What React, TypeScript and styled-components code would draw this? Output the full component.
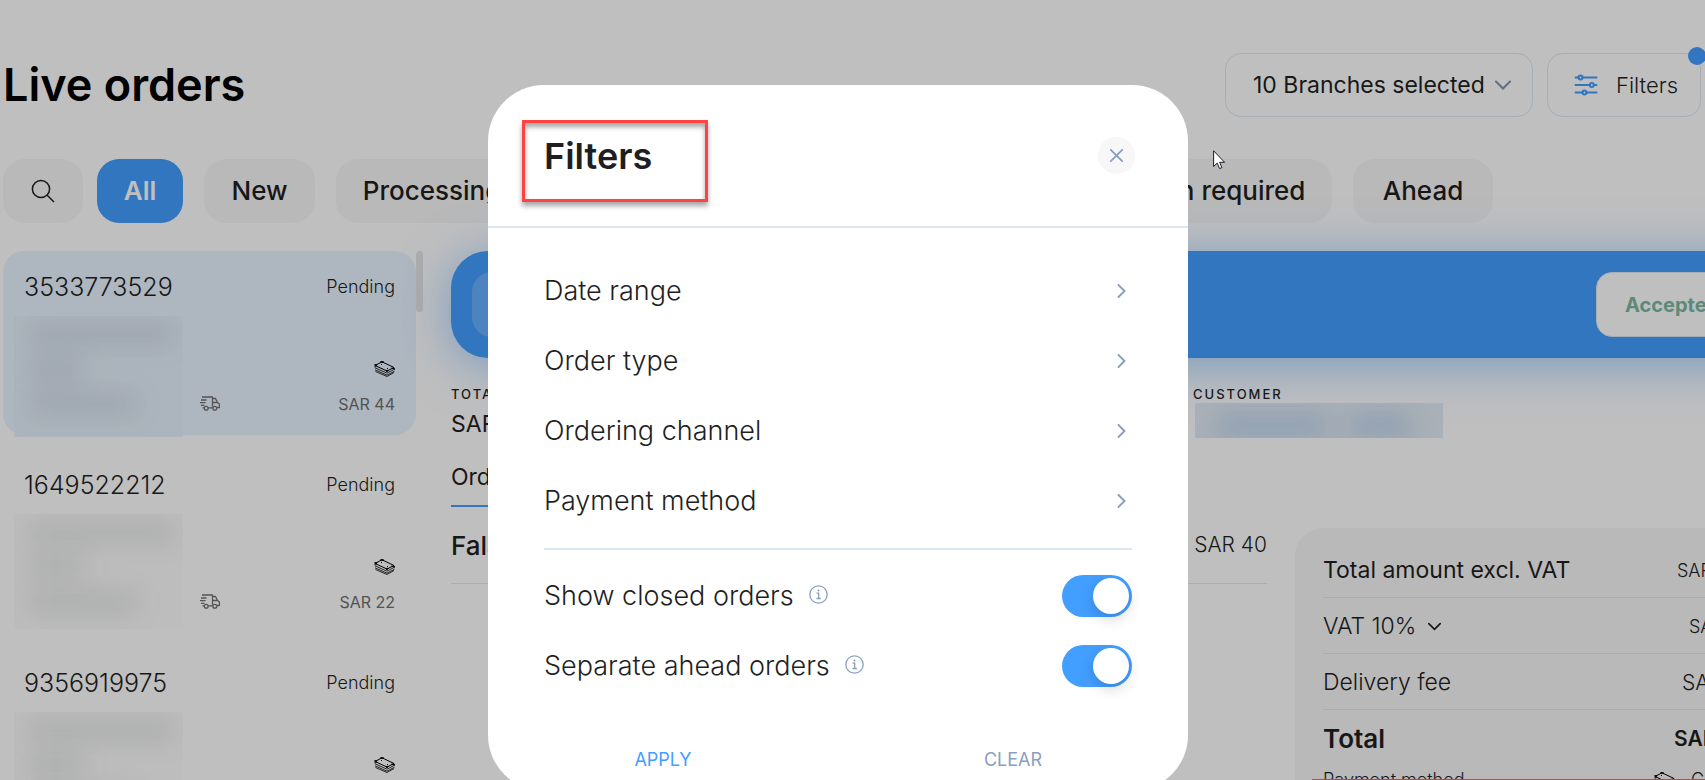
import React from "react";
import styled, { createGlobalStyle, css } from "styled-components";

const GlobalStyle = createGlobalStyle`
  *, *::before, *::after { box-sizing: border-box; }
  body {
    margin: 0;
    overflow: hidden;
    background: #fff;
    color: #1f1f1f;
    font-family: Inter, "Liberation Sans", sans-serif;
    font-size: 23px;
    line-height: 1.5;
  }
  button, select, input { font: inherit; color: inherit; }
  button { border: 0; background: none; padding: 0; cursor: pointer; }
  h1, h2, h3, p, ul, dl, dd, dt { margin: 0; padding: 0; }
  ul { list-style: none; }
`;

const colors = {
  blue: "#429eff",
  line: "#dae8f4",
  pill: "#f7f7f7",
  muted: "#8a9ebf",
};

/* ---------- page ---------- */

const Page = styled.div`
  position: relative;
  height: 100vh;
  overflow: hidden;
  display: flex;
  flex-direction: column;
  padding: 53px 4px 0 3px;
`;

const PageHeader = styled.header`
  display: flex;
  align-items: center;
  gap: 14px;
  height: 64px;
  flex: none;
`;

const PageTitle = styled.h1`
  flex: 1;
  font-size: 45px;
  line-height: 64px;
  font-weight: 600;
  color: #000;
`;

const BranchPicker = styled.label`
  position: relative;
  display: flex;
  align-items: center;
  width: 308px;
  height: 64px;
  border: 1px solid ${colors.line};
  border-radius: 16px;

  select {
    width: 100%;
    height: 100%;
    margin: 0;
    padding: 0 36px 0 27px;
    border: 0;
    background: none;
    appearance: none;
  }
  svg {
    position: absolute;
    right: 21px;
    pointer-events: none;
  }
`;

const FilterButton = styled.button`
  position: relative;
  display: flex;
  align-items: center;
  gap: 18px;
  width: 154px;
  height: 64px;
  padding-left: 26px;
  border: 1px solid ${colors.line};
  border-radius: 16px;
  font-size: 22px;
  font-weight: 300;
`;

const ActiveDot = styled.span`
  position: absolute;
  top: -7px;
  right: -6px;
  width: 18px;
  height: 18px;
  border-radius: 50%;
  background: ${colors.blue};
`;

const Tabs = styled.nav`
  display: flex;
  gap: 21px;
  flex: none;
  margin-top: 42px;
`;

const Tab = styled.button<{ $width: number; $active?: boolean }>`
  flex: none;
  width: ${(p) => p.$width}px;
  height: 64px;
  padding-bottom: 2px;
  border-radius: 22px;
  background: ${(p) => (p.$active ? colors.blue : colors.pill)};
  color: ${(p) => (p.$active ? "#fff" : "#1f1f1f")};
  font-size: 26px;
  font-weight: ${(p) => (p.$active ? 600 : 500)};
  white-space: nowrap;
`;

const SearchButton = styled.button`
  display: grid;
  place-items: center;
  flex: none;
  width: 80px;
  height: 64px;
  margin-right: -7px;
  border-radius: 22px;
  background: ${colors.pill};
`;

const Columns = styled.div`
  display: flex;
  flex: 1;
  min-height: 0;
  gap: 28px;
  margin-top: 28px;
`;

/* ---------- order list ---------- */

const OrderList = styled.section`
  display: flex;
  flex: none;
  align-items: flex-start;
`;

const Orders = styled.ul`
  display: flex;
  flex-direction: column;
  gap: 14px;
  width: 413px;
`;

const ScrollThumb = styled.div`
  width: 7px;
  height: 61px;
  border-radius: 4px;
  background: #e6e6e6;
`;

const OrderCard = styled.li<{ $selected?: boolean }>`
  display: grid;
  grid-template-columns: 180px 1fr auto;
  grid-template-rows: 36px 53px 22px 48px;
  height: 184px;
  padding: 18px 21px 0 11px;
  border-radius: 21px;
  background: ${(p) => (p.$selected ? "#e9f4ff" : "transparent")};
`;

const OrderNumber = styled.h3`
  grid-column: 1 / 3;
  padding-left: 10px;
  font-size: 25px;
  line-height: 36px;
  font-weight: 300;
`;

const Status = styled.span`
  font-size: 18px;
  line-height: 36px;
  font-weight: 300;
`;

const Redacted = styled.div<{ $selected?: boolean }>`
  grid-column: 1;
  grid-row: 2 / 5;
  display: flex;
  flex-direction: column;
  gap: 11px;
  width: 169px;
  height: ${(p) => (p.$selected ? 121 : 115)}px;
  margin-top: 11px;
  padding: 6px 14px;
  overflow: hidden;
  background: ${(p) => (p.$selected ? "#e6f1fc" : "#fcfcfc")};
`;

const Smudge = styled.span<{ $width: number }>`
  flex: none;
  width: ${(p) => p.$width}px;
  height: 24px;
  background: rgba(60, 70, 80, 0.1);
  filter: blur(12px);
`;

const PaymentIcon = styled.span`
  grid-column: 3;
  grid-row: 3;
  display: flex;
  justify-content: flex-end;
  align-items: center;
`;

const DeliveryIcon = styled.span`
  grid-column: 2;
  grid-row: 4;
  display: flex;
  align-items: center;
  padding: 0 0 2px 6px;
`;

const OrderPrice = styled.span`
  grid-column: 3;
  grid-row: 4;
  text-align: right;
  font-size: 16px;
  line-height: 48px;
  color: #6f6f6f;
`;

/* ---------- order detail ---------- */

const Detail = styled.main`
  flex: 1;
  min-width: 0;
  margin-right: -94px;
`;

const Banner = styled.div`
  display: flex;
  justify-content: space-between;
  padding: 21px;
  border-radius: 37px;
  background: ${colors.blue};
  box-shadow: 0 7px 50px rgba(66, 158, 255, 0.5);
`;

const BannerChip = styled.div`
  width: 65px;
  height: 65px;
  border-radius: 20px;
  background: rgba(255, 255, 255, 0.2);
`;

const AcceptButton = styled.button`
  width: 178px;
  height: 65px;
  padding-left: 28px;
  border: 1px solid ${colors.line};
  border-radius: 16px;
  background: #fff;
  color: #7db8a0;
  text-align: left;
  font-size: 20px;
  font-weight: 700;
`;

const Meta = styled.dl`
  display: grid;
  grid-template-columns: 742px 1fr;
  margin-top: 24px;
`;

const MetaItem = styled.div`
  dt {
    font-size: 13px;
    line-height: 24px;
    font-weight: 500;
    letter-spacing: 2px;
    text-transform: uppercase;
  }
`;

const MetaValue = styled.dd`
  height: 37px;
  line-height: 36px;
`;

const CustomerName = styled.dd`
  && {
    display: flex;
    align-items: center;
    gap: 22px;
    width: 248px;
    height: 35px;
    margin: -3px 0 0 2px;
    padding: 10px 18px 0 22px;
    overflow: hidden;
    background: #e2ebf4;
  }
`;

const NameSmudge = styled.span<{ $width: number }>`
  width: ${(p) => p.$width}px;
  height: 22px;
  background: rgba(66, 140, 220, 0.24);
  filter: blur(12px);
`;

const DetailBody = styled.div`
  display: grid;
  grid-template-columns: 816px 1fr;
  gap: 28px;
  margin-top: 15px;
`;

const DetailTab = styled.button`
  display: block;
  height: 49px;
  padding-bottom: 8px;
  border-bottom: 2px solid ${colors.blue};
  text-align: left;
`;

const Item = styled.div`
  display: flex;
  align-items: center;
  justify-content: space-between;
  height: 77px;
  border-bottom: 1px solid ${colors.line};
  font-size: 21px;
  font-weight: 300;
`;

const ItemName = styled.h3`
  font-size: 26px;
  font-weight: 500;
`;

const Summary = styled.aside`
  margin-top: 70px;
  padding: 14px 28px;
  border-radius: 28px;
  background: ${colors.pill};
`;

const SummaryRow = styled.div<{ $bold?: boolean; $regular?: boolean }>`
  display: flex;
  align-items: center;
  height: 56px;
  padding-top: 2px;
  border-bottom: 1px solid ${colors.line};
  font-size: 23px;
  font-weight: ${(p) => (p.$regular ? 400 : 300)};
  ${(p) =>
    p.$bold &&
    css`
      border-color: transparent;
      font-size: 26px;
      font-weight: 600;
    `}
`;

const SummaryLabel = styled.span`
  display: flex;
  align-items: center;
  gap: 12px;
  flex: 1;
`;

const SummaryValue = styled.span<{ $width: number; $large?: boolean }>`
  width: ${(p) => p.$width}px;
  font-size: ${(p) => (p.$large ? 21 : 18)}px;
  font-weight: ${(p) => (p.$large ? "inherit" : 300)};
`;

const PaymentRow = styled.div`
  display: flex;
  align-items: flex-start;
  justify-content: space-between;
  font-size: 18px;
  font-weight: 300;
`;

const PaymentValue = styled.span`
  display: flex;
  align-items: center;
  gap: 16px;
  width: 113px;
`;

const Notice = styled.div`
  position: absolute;
  left: 1312px;
  right: 0;
  bottom: 0;
  height: 1px;
  background: #ff5c6c;
`;

/* ---------- filters dialog ---------- */

const Backdrop = styled.div`
  position: absolute;
  inset: 0;
  display: flex;
  justify-content: center;
  align-items: flex-start;
  padding: 85px 29px 0 0;
  background: rgba(0, 0, 0, 0.25);
`;

const Dialog = styled.section`
  position: relative;
  width: 700px;
  border-radius: 56px;
  background: #fff;
`;

const DialogHeader = styled.header`
  display: flex;
  align-items: center;
  justify-content: space-between;
  height: 143px;
  padding: 0 53px 0 56px;
  border-bottom: 2px solid ${colors.line};
`;

const DialogTitle = styled.h2`
  font-size: 36px;
  font-weight: 600;
`;

const CloseButton = styled.button`
  display: grid;
  place-items: center;
  width: 37px;
  height: 37px;
  border-radius: 50%;
  background: #f7f7f7;
`;

const Highlight = styled.div`
  position: absolute;
  left: 34px;
  top: 35px;
  width: 186px;
  height: 82px;
  border: 3px solid #ff4343;
  box-shadow: 0 4px 5px rgba(0, 0, 0, 0.35), inset 0 4px 5px rgba(0, 0, 0, 0.35);
  pointer-events: none;
`;

const DialogBody = styled.div`
  padding: 28px 56px 0;
`;

const FilterRow = styled.button`
  display: flex;
  align-items: center;
  justify-content: space-between;
  width: 100%;
  height: 70px;
  padding-right: 6px;
  font-size: 27px;
  font-weight: 300;
`;

const Divider = styled.hr`
  height: 2px;
  margin: 12px 0 11px;
  border: 0;
  background: ${colors.line};
`;

const ToggleRow = styled.label`
  display: flex;
  align-items: center;
  height: 70px;
  font-size: 27px;
  font-weight: 300;

  svg {
    margin: 0 0 4px 15px;
  }
`;

const Switch = styled.input`
  appearance: none;
  display: flex;
  align-items: center;
  width: 70px;
  height: 42px;
  margin: 0 0 0 auto;
  padding: 3px;
  border-radius: 21px;
  background: #d5dbe3;

  &::before {
    content: "";
    width: 36px;
    height: 36px;
    border-radius: 50%;
    background: #fff;
    box-shadow: 0 5px 14px rgba(0, 0, 0, 0.16);
  }
  &:checked {
    justify-content: flex-end;
    background: ${colors.blue};
  }
`;

const DialogFooter = styled.footer`
  display: grid;
  grid-template-columns: 1fr 1fr;
  justify-items: center;
  padding: 26px 0 0;
`;

const FooterButton = styled.button<{ $primary?: boolean }>`
  width: 160px;
  height: 64px;
  color: ${(p) => (p.$primary ? colors.blue : colors.muted)};
  font-size: 18px;
`;

/* ---------- pointer ---------- */

const Pointer = styled.svg`
  position: absolute;
  left: 1213px;
  top: 150px;
`;

/* ---------- icons ---------- */

const SearchIcon = () => (
  <svg width="24" height="24" viewBox="0 0 24 24" fill="none" stroke="#1f1f1f" strokeWidth="1.5">
    <circle cx="10" cy="10" r="8.6" />
    <path d="M16 16l7 7" />
  </svg>
);

const SlidersIcon = () => (
  <svg width="24" height="22" viewBox="0 0 24 22" fill="none" stroke={colors.blue} strokeWidth="2" strokeLinecap="round">
    <path d="M1.5 3.5h3M8.5 3.5h14M1.5 11h14M20 11h2.5M1.5 18.5h7M12.5 18.5h10" />
    <circle cx="6.5" cy="3.5" r="2" />
    <circle cx="17.8" cy="11" r="2" />
    <circle cx="10.5" cy="18.5" r="2" />
  </svg>
);

const CaretDown = ({ color, size }: { color: string; size: number }) => (
  <svg width={size} height={size} viewBox="0 0 16 16" fill="none" stroke={color} strokeWidth="2" strokeLinecap="round">
    <path d="M1 4.5l7 7 7-7" />
  </svg>
);

const ChevronRight = () => (
  <svg width="9" height="14" viewBox="0 0 9 14" fill="none" stroke={colors.muted} strokeWidth="1.9" strokeLinecap="round" strokeLinejoin="round">
    <path d="M1.5 1l6 6-6 6" />
  </svg>
);

const CloseIcon = () => (
  <svg width="13" height="13" viewBox="0 0 13 13" fill="none" stroke={colors.muted} strokeWidth="1.8" strokeLinecap="round">
    <path d="M.8.8l11.4 11.4M12.2.8L.8 12.2" />
  </svg>
);

const InfoIcon = () => (
  <svg width="19" height="19" viewBox="0 0 19 19" fill="none" stroke={colors.muted} strokeWidth="1.3">
    <circle cx="9.5" cy="9.5" r="8.7" />
    <path d="M7.5 8.2h2.2v5M7.5 13.5h4.4" />
    <circle cx="9.5" cy="5.4" r="1" fill={colors.muted} stroke="none" />
  </svg>
);

const CashIcon = () => (
  <svg width="21" height="16" viewBox="0 0 21 16" fill="none" stroke="#000" strokeWidth="1" strokeLinejoin="round">
    <path d="M8 .8L20 6.5 13 10 1 4.5z" />
    <path d="M1 6.8l12 5.4 7.500-4M1 8.800l12 5.400 7.500-4M1 4.500v2M1.500 10.500L13 15.500l7-4" strokeWidth=".8" />
    <path d="M6.500.5h3l-1.500 1.500zM.5 3.500h2.500l-1 2zM17.500 7h3v1.500zM11.500 9.500h3l-1.500 1.500z" fill="#000" strokeWidth=".6" />
    <path d="M7 3.300l1 .4M13 7.400l1 .4" />
  </svg>
);

const TruckIcon = () => (
  <svg width="20" height="15" viewBox="0 0 20 15" fill="none" stroke="#707070" strokeWidth="1.3" strokeLinejoin="round">
    <path d="M2 1h10.500v9.800M12.500 2.500h3l2 4H12.500M17.500 6.500l1.900 1.500v3.500h-2.400M12.800 11.800H8M1 4h5.500M0 6.700h5.500M1 9.300h3.500M2.500 11.800h1.800" />
    <circle cx="6.2" cy="12.2" r="1.9" />
    <circle cx="14.8" cy="12.2" r="1.9" />
  </svg>
);

const PointerIcon = () => (
  <Pointer width="13" height="20" viewBox="0 0 13 20" fill="#fff" stroke="#1a1a2a" strokeWidth="1" aria-hidden>
    <path d="M.6.8v15.700l3.600-3.400 2.400 5.500 2.300-1-2.300-5.300h5z" />
  </Pointer>
);

/* ---------- data ---------- */

const orders = [
  { number: "3533773529", price: "SAR 44", selected: true },
  { number: "1649522212", price: "SAR 22" },
  { number: "9356919975", price: "SAR 31" },
];

const tabs = [
  { label: "All", width: 86, active: true },
  { label: "New", width: 111 },
  { label: "Processing", width: 192 },
  { label: "Ready", width: 120 },
  { label: "Dispatched", width: 200 },
  { label: "Delayed", width: 156 },
  { label: "Action required", width: 244 },
  { label: "Ahead", width: 140 },
];

const filters = ["Date range", "Order type", "Ordering channel", "Payment method"];
const toggles = ["Show closed orders", "Separate ahead orders"];

export default function App() {
  return (
    <>
      <GlobalStyle />
      <Page>
        <PageHeader>
          <PageTitle>Live orders</PageTitle>
          <BranchPicker>
            <select aria-label="Branches">
              <option>10 Branches selected</option>
            </select>
            <CaretDown color="#7f93ad" size={16} />
          </BranchPicker>
          <FilterButton>
            <SlidersIcon />
            Filters
            <ActiveDot />
          </FilterButton>
        </PageHeader>

        <Tabs>
          <SearchButton aria-label="Search">
            <SearchIcon />
          </SearchButton>
          {tabs.map((tab) => (
            <Tab key={tab.label} $width={tab.width} $active={tab.active}>
              {tab.label}
            </Tab>
          ))}
        </Tabs>

        <Columns>
          <OrderList>
            <Orders>
              {orders.map((order) => (
                <OrderCard key={order.number} $selected={order.selected}>
                  <OrderNumber>{order.number}</OrderNumber>
                  <Status>Pending</Status>
                  <Redacted $selected={order.selected}>
                    <Smudge $width={146} />
                    <Smudge $width={56} />
                    <Smudge $width={110} />
                  </Redacted>
                  <PaymentIcon>
                    <CashIcon />
                  </PaymentIcon>
                  <DeliveryIcon>
                    <TruckIcon />
                  </DeliveryIcon>
                  <OrderPrice>{order.price}</OrderPrice>
                </OrderCard>
              ))}
            </Orders>
            <ScrollThumb />
          </OrderList>

          <Detail>
            <Banner>
              <BannerChip />
              <AcceptButton>Accepted</AcceptButton>
            </Banner>
            <Meta>
              <MetaItem>
                <dt>Total</dt>
                <MetaValue>SAR 44</MetaValue>
              </MetaItem>
              <MetaItem>
                <dt>Customer</dt>
                <CustomerName>
                  <NameSmudge $width={110} />
                  <NameSmudge $width={60} />
                </CustomerName>
              </MetaItem>
            </Meta>
            <DetailBody>
              <div>
                <DetailTab>Order</DetailTab>
                <Item>
                  <ItemName>Falafel</ItemName>
                  SAR 40
                </Item>
              </div>
              <Summary>
                <SummaryRow $regular>
                  <SummaryLabel>Total amount excl. VAT</SummaryLabel>
                  <SummaryValue $width={90}>SAR 40</SummaryValue>
                </SummaryRow>
                <SummaryRow>
                  <SummaryLabel>
                    VAT 10% <CaretDown color="#1f1f1f" size={13} />
                  </SummaryLabel>
                  <SummaryValue $width={78}>SAR 4</SummaryValue>
                </SummaryRow>
                <SummaryRow>
                  <SummaryLabel>Delivery fee</SummaryLabel>
                  <SummaryValue $width={85} $large>SAR 0</SummaryValue>
                </SummaryRow>
                <SummaryRow $bold>
                  <SummaryLabel>Total</SummaryLabel>
                  <SummaryValue $width={93} $large>SAR 44</SummaryValue>
                </SummaryRow>
                <PaymentRow>
                  <span>Payment method</span>
                  <PaymentValue>
                    <CashIcon />
                    Cash
                  </PaymentValue>
                </PaymentRow>
              </Summary>
            </DetailBody>
          </Detail>
        </Columns>

        <Notice />

        <Backdrop>
          <Dialog role="dialog" aria-labelledby="filters-title">
            <DialogHeader>
              <DialogTitle id="filters-title">Filters</DialogTitle>
              <CloseButton aria-label="Close">
                <CloseIcon />
              </CloseButton>
            </DialogHeader>
            <DialogBody>
              {filters.map((name) => (
                <FilterRow key={name}>
                  {name}
                  <ChevronRight />
                </FilterRow>
              ))}
              <Divider />
              {toggles.map((name) => (
                <ToggleRow key={name}>
                  {name}
                  <InfoIcon />
                  <Switch type="checkbox" defaultChecked />
                </ToggleRow>
              ))}
            </DialogBody>
            <DialogFooter>
              <FooterButton $primary>APPLY</FooterButton>
              <FooterButton>CLEAR</FooterButton>
            </DialogFooter>
            <Highlight />
          </Dialog>
        </Backdrop>
        <PointerIcon />
      </Page>
    </>
  );
}
